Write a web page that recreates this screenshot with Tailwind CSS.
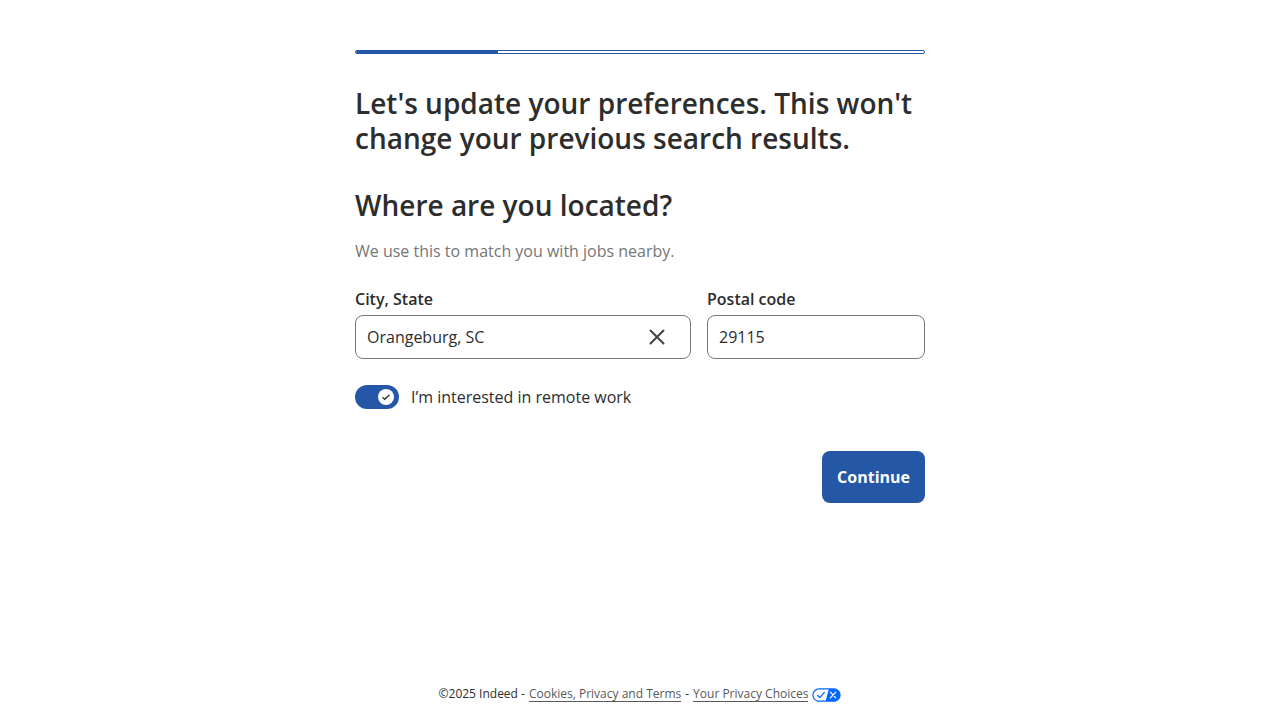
<!DOCTYPE html>
<html lang="en">
<head>
<meta charset="utf-8">
<meta name="viewport" content="width=device-width, initial-scale=1">
<title>Update your preferences</title>
<script src="https://cdn.jsdelivr.net/npm/@tailwindcss/browser@4"></script>
</head>
<body class="flex min-h-screen flex-col bg-white font-['Open_Sans','Noto_Sans',sans-serif] text-base text-[#2d2d2d]">
<main class="mx-auto w-full max-w-[602px] flex-1 px-4 pt-[50px]">
  <div role="progressbar" aria-label="Progress" aria-valuenow="25" aria-valuemin="0" aria-valuemax="100" class="h-1 overflow-hidden rounded-sm border border-[#2557a7] bg-white">
    <div class="-mt-px h-1 w-1/4 bg-[#2557a7]"></div>
  </div>
  <h1 class="mt-8 text-[28px] leading-[35px] font-semibold">Let's update your preferences. This won't change your previous search results.</h1>
  <h2 class="mt-8 text-[28px] leading-[35px] font-semibold">Where are you located?</h2>
  <p class="mt-4 text-base leading-6 text-[#767676]">We use this to match you with jobs nearby.</p>
  <form>
    <div class="mt-6 flex gap-4">
      <div class="min-w-0 flex-[336]">
        <label for="city" class="block leading-6 font-semibold">City, State</label>
        <div class="mt-1 flex h-11 items-center rounded-lg border border-[#767676] pr-[22px] pl-[11px]">
          <input id="city" type="text" value="Orangeburg, SC" class="min-w-0 flex-1 bg-transparent outline-none">
          <button type="button" aria-label="Clear city" class="text-[#424242]">
            <svg class="size-[22px]" viewBox="0 0 22 22" fill="none" stroke="currentColor" stroke-width="2" stroke-linecap="round"><path d="M4.500 4.500l13 13M17.500 4.500l-13 13"/></svg>
          </button>
        </div>
      </div>
      <div class="min-w-0 flex-[218]">
        <label for="postal" class="block leading-6 font-semibold">Postal code</label>
        <input id="postal" type="text" value="29115" class="mt-1 block h-11 w-full rounded-lg border border-[#767676] px-[11px] outline-none">
      </div>
    </div>
    <label class="mt-[26px] flex w-fit items-center gap-3 leading-6">
      <span class="relative flex h-6 w-11">
        <input type="checkbox" role="switch" checked class="h-6 w-11 appearance-none rounded-full bg-[#2557a7]">
        <svg class="pointer-events-none absolute inset-y-1 right-1 size-4 overflow-visible" viewBox="0 0 16 16" fill="none"><circle cx="7" cy="8" r="8" fill="#fff"/><path d="M3.500 8.200l2.200 2.100 4.800-4.600" stroke="#2d2d2d" stroke-width="1.200"/></svg>
      </span>
      <span>I’m interested in remote work</span>
    </label>
    <div class="mt-[42px] flex justify-end">
      <button type="submit" class="h-[52px] rounded-lg bg-[#2557a7] px-[15px] font-bold text-white">Continue</button>
    </div>
  </form>
</main>
<footer class="flex flex-wrap items-center justify-center gap-1 pb-4 text-xs leading-5">
  <span>©2025 Indeed -</span>
  <a href="#" class="border-b border-[#595959] leading-[15px] text-[#595959]">Cookies, Privacy and Terms</a>
  <span>-</span>
  <a href="#" class="border-b border-[#595959] leading-[15px] text-[#595959]">Your Privacy Choices</a>
  <svg class="mt-px h-[14px] w-[29px]" viewBox="0 0 30 14" aria-hidden="true"><path fill="#fff" d="M7.400 12.800h6.800l3.100-11.600H7.400C4.200 1.200 1.600 3.800 1.600 7s2.600 5.800 5.800 5.800z"/><path fill="#06f" d="M22.600 0H7.400C3.500 0 .4 3.100.4 7s3.100 7 7 7h15.200c3.900 0 7-3.100 7-7s-3.200-7-7-7zM1.600 7c0-3.200 2.600-5.800 5.800-5.800h9.900l-3.100 11.600H7.400C4.200 12.800 1.600 10.200 1.600 7z"/><path fill="none" stroke="#fff" stroke-width="1.300" stroke-linecap="round" d="M19 4l5.600 6M24.600 4L19 10"/><path fill="none" stroke="#06f" stroke-width="1.300" stroke-linecap="round" stroke-linejoin="round" d="M5.800 7.500l2.300 2.200L12.700 4.200"/></svg>
</footer>
</body>
</html>
